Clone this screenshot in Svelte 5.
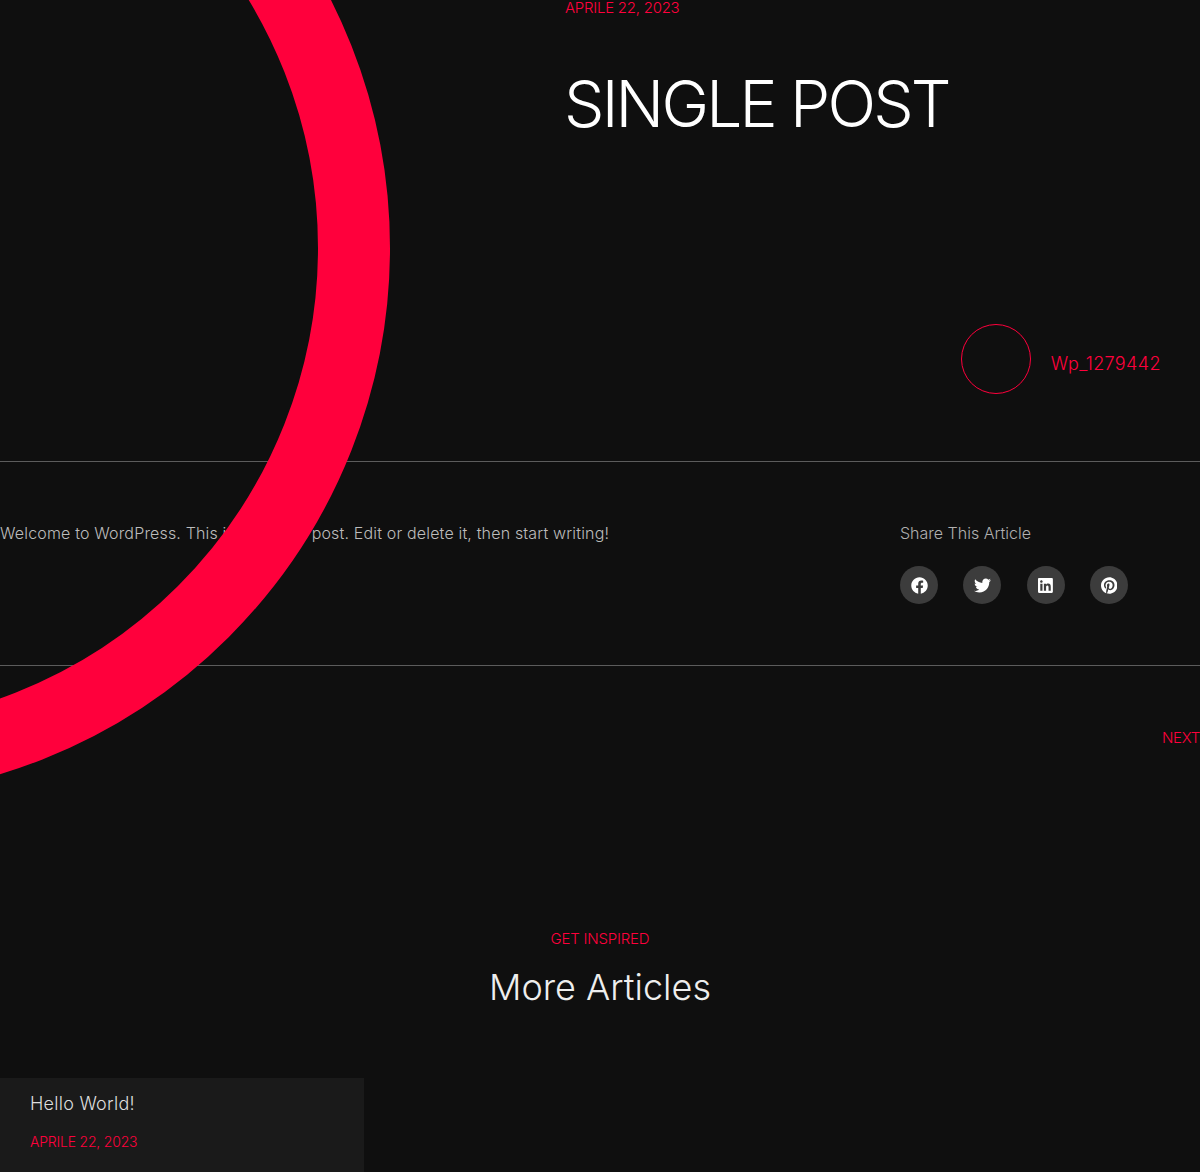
<script lang="ts">
  const icons = [
    { name: "Facebook", box: "0 0 512 512", d: "M504 256C504 119 393 8 256 8S8 119 8 256c0 123.78 90.69 226.38 209.25 245V327.69h-63V256h63v-54.64c0-62.15 37-96.48 93.67-96.48 27.14 0 55.52 4.84 55.52 4.84v61h-31.28c-30.8 0-40.41 19.12-40.41 38.73V256h68.78l-11 71.69h-57.78V501C413.31 482.38 504 379.78 504 256z" },
    { name: "Twitter", box: "0 0 512 512", d: "M459.37 151.716c.325 4.548.325 9.097.325 13.645 0 138.72-105.583 298.558-298.558 298.558-59.452 0-114.68-17.219-161.137-47.106 8.447.974 16.568 1.299 25.34 1.299 49.055 0 94.213-16.568 130.274-44.832-46.132-.975-84.792-31.188-98.112-72.772 6.498.974 12.995 1.624 19.818 1.624 9.421 0 18.843-1.3 27.614-3.573-48.081-9.747-84.143-51.98-84.143-102.985v-1.299c13.969 7.797 30.214 12.67 47.431 13.319-28.264-18.843-46.781-51.005-46.781-87.391 0-19.492 5.197-37.36 14.294-52.954 51.655 63.675 129.3 105.258 216.365 109.807-1.624-7.797-2.599-15.918-2.599-24.04 0-57.828 46.782-104.934 104.934-104.934 30.213 0 57.502 12.67 76.67 33.137 23.715-4.548 46.456-13.32 66.599-25.34-7.798 24.366-24.366 44.833-46.132 57.827 21.117-2.273 41.584-8.122 60.426-16.243-14.292 20.791-32.161 39.308-52.628 54.253z" },
    { name: "LinkedIn", box: "0 0 448 512", d: "M416 32H31.9C14.3 32 0 46.5 0 64.3v383.4C0 465.5 14.3 480 31.9 480H416c17.6 0 32-14.5 32-32.3V64.3c0-17.8-14.4-32.3-32-32.3zM135.4 416H69V202.2h66.5V416zm-33.2-243c-21.3 0-38.5-17.3-38.5-38.5S80.9 96 102.2 96c21.2 0 38.5 17.3 38.5 38.5 0 21.3-17.2 38.5-38.5 38.5zm282.1 243h-66.4V312c0-24.8-.5-56.7-34.5-56.7-34.6 0-39.9 27-39.9 54.9V416h-66.4V202.2h63.7v29.2h.9c8.9-16.8 30.6-34.5 62.9-34.5 67.2 0 79.7 44.3 79.7 101.9V416z" },
    { name: "Pinterest", box: "0 0 496 512", d: "M496 256c0 137-111 248-248 248-25.6 0-50.2-3.9-73.4-11.1 10.1-16.5 25.2-43.5 30.8-65 3-11.6 15.4-59 15.4-59 8.1 15.4 31.7 28.5 56.8 28.5 74.8 0 128.7-68.8 128.7-154.3 0-81.9-66.9-143.2-152.9-143.2-107 0-163.9 71.8-163.9 150.1 0 36.4 19.4 81.7 50.3 96.1 4.7 2.2 7.2 1.2 8.3-3.3.8-3.4 5-20.3 6.9-28.1.6-2.5.3-4.7-1.7-7.1-10.1-12.5-18.3-35.3-18.3-56.6 0-54.7 41.4-107.6 112-107.6 60.9 0 103.6 41.5 103.6 100.9 0 67.1-33.9 113.6-78 113.6-24.3 0-42.6-20.1-36.7-44.8 7-29.5 20.5-61.3 20.5-82.6 0-19-10.2-34.9-31.4-34.9-24.9 0-44.9 25.7-44.9 60.2 0 22 7.4 36.8 7.4 36.8s-24.5 103.8-29 123.2c-5 21.4-3 51.6-.9 71.2C65.4 450.9 0 361.1 0 256 0 119 111 8 248 8s248 111 248 248z" }
  ];
</script>

<div class="page">
  <div class="ring" aria-hidden="true"></div>

  <header class="hero">
    <div class="hero-text">
      <span class="date">APRILE 22, 2023</span>
      <h1>SINGLE POST</h1>
    </div>
    <div class="author">
      <span class="avatar"></span>
      <span class="author-name">Wp_1279442</span>
    </div>
  </header>

  <section class="body">
    <p>Welcome to WordPress. This is your first post. Edit or delete it, then start writing!</p>
    <div class="share">
      <span class="share-title">Share This Article</span>
      <div class="share-icons">
        {#each icons as icon}
          <a href="#top" class="share-icon" aria-label={icon.name}>
            <svg viewBox={icon.box} fill="currentColor"><path d={icon.d} /></svg>
          </a>
        {/each}
      </div>
    </div>
  </section>

  <nav class="pager">
    <a href="#top">NEXT</a>
  </nav>

  <section class="more">
    <span class="eyebrow">GET INSPIRED</span>
    <h2>More Articles</h2>
  </section>

  <article class="card">
    <h3>Hello World!</h3>
    <span class="card-date">APRILE 22, 2023</span>
  </article>
</div>

<style>
  :global(body) {
    margin: 0;
    background: #0f0f0f;
  }

  .page {
    position: relative;
    height: 1172px;
    overflow: hidden;
    background: #0f0f0f;
    color: #fff;
    font-family: Inter, "Open Sans", sans-serif;
    font-weight: 300;
  }

  .ring {
    position: absolute;
    left: -710px;
    top: -302px;
    width: 956px;
    height: 956px;
    border: 72px solid #ff003c;
    border-radius: 50%;
    z-index: 2;
  }

  .hero {
    height: 462px;
    box-sizing: border-box;
    border-bottom: 1px solid #5c5c5c;
    display: flex;
    flex-direction: column;
    padding-left: 565px;
    padding-right: 39px;
  }

  .hero-text {
    display: flex;
    flex-direction: column;
  }

  .date {
    font-size: 15px;
    line-height: 16px;
    color: #ff003c;
    letter-spacing: -0.25px;
  }

  h1 {
    margin: 48px 0 0 -1px;
    font-size: 64px;
    line-height: 80px;
    font-weight: 300;
    letter-spacing: -2.8px;
    color: #fff;
  }

  .author {
    margin-top: 180px;
    display: flex;
    justify-content: flex-end;
    align-items: center;
    gap: 20px;
  }

  .avatar {
    width: 70px;
    height: 70px;
    box-sizing: border-box;
    border: 1px solid #ff003c;
    border-radius: 50%;
  }

  .author-name {
    font-size: 18px;
    line-height: 27px;
    letter-spacing: 0.4px;
    color: #ff003c;
    padding-top: 8px;
  }

  .body {
    height: 204px;
    box-sizing: border-box;
    border-bottom: 1px solid #5c5c5c;
    padding: 59px 72px 0 0;
    display: flex;
    justify-content: space-between;
  }

  .body p {
    margin: 0;
    font-size: 16px;
    line-height: 24px;
    letter-spacing: 0.165px;
    color: #bcbcbc;
  }

  .share {
    width: 228px;
    display: flex;
    flex-direction: column;
  }

  .share-title {
    font-size: 16px;
    line-height: 24px;
    color: #b0b0b0;
  }

  .share-icons {
    margin-top: 21px;
    display: flex;
    gap: 25.3px;
  }

  .share-icon {
    width: 38px;
    height: 38px;
    border-radius: 50%;
    background: #3c3c3c;
    color: #fff;
    display: flex;
    align-items: center;
    justify-content: center;
  }

  .share-icon svg {
    height: 17px;
    width: auto;
  }

  .pager {
    padding-top: 62px;
    display: flex;
    justify-content: flex-end;
  }

  .pager a {
    font-size: 15px;
    line-height: 20px;
    letter-spacing: -0.3px;
    color: #ff003c;
    text-decoration: none;
  }

  .more {
    margin-top: 181px;
    display: flex;
    flex-direction: column;
    align-items: center;
  }

  .eyebrow {
    font-size: 15px;
    line-height: 20px;
    letter-spacing: -0.2px;
    color: #ff003c;
  }

  h2 {
    margin: 13px 0 0;
    font-size: 36px;
    line-height: 50px;
    font-weight: 300;
    color: #eee;
  }

  .card {
    margin-top: 66px;
    width: 364px;
    height: 94px;
    box-sizing: border-box;
    padding: 12px 30px 0;
    background: #1a1a1a;
    display: flex;
    flex-direction: column;
  }

  h3 {
    margin: 0;
    font-size: 18px;
    line-height: 27px;
    letter-spacing: 0.25px;
    font-weight: 300;
    color: #ddd;
  }

  .card-date {
    margin-top: 13px;
    font-size: 14px;
    line-height: 24px;
    letter-spacing: -0.2px;
    color: #ff003c;
  }
</style>
